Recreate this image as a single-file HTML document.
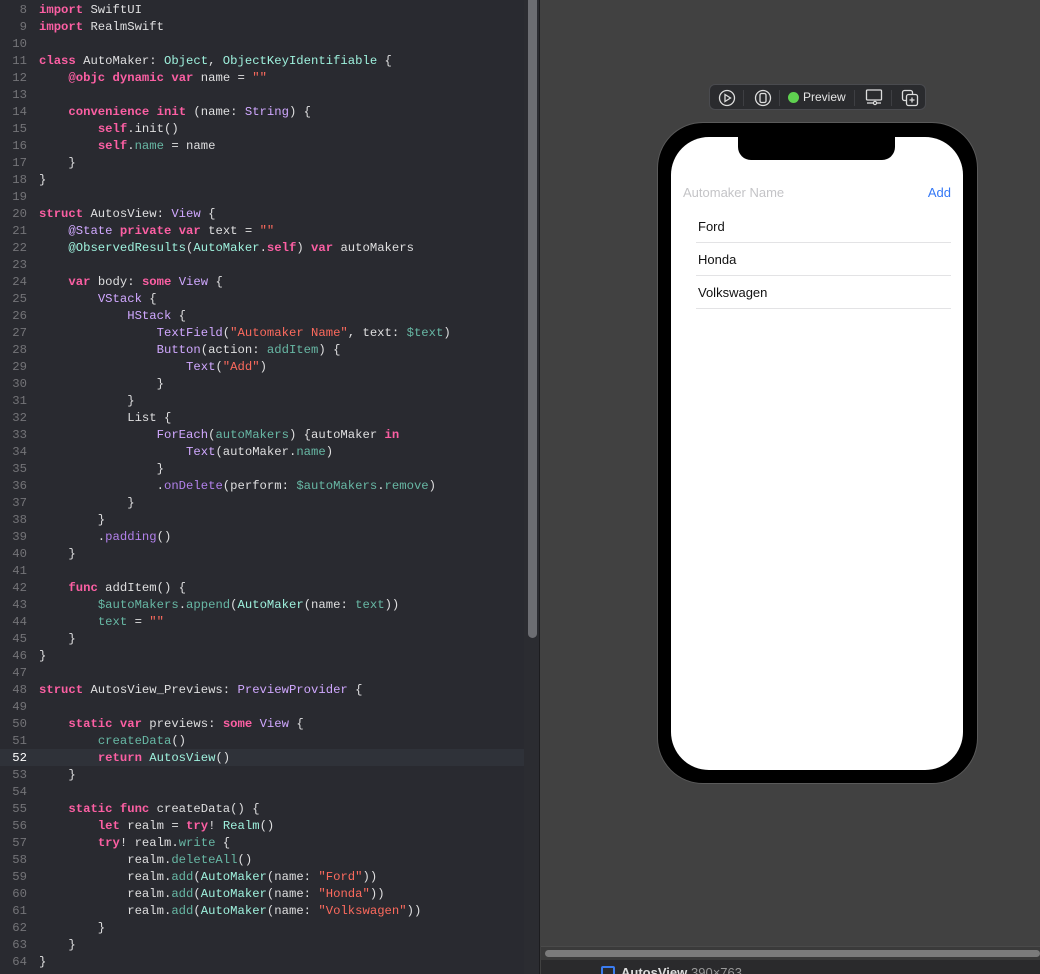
<!DOCTYPE html>
<html><head><meta charset="utf-8"><style>
*{margin:0;padding:0;box-sizing:border-box}
body{width:1040px;height:974px;overflow:hidden;background:#414141;position:relative;font-family:"Liberation Sans",sans-serif}
#ed{position:absolute;left:0;top:0;width:526px;height:974px;background:#292a30}
#hl{position:absolute;left:0;top:749px;width:524px;height:17px;background:#2f3239}
pre{position:absolute;left:0;top:2px;font-family:"Liberation Mono",monospace;font-size:12.25px;line-height:17px;color:#dfdfe0}
.ln{display:inline-block;width:27px;text-align:right;color:#747478;margin-right:12px}
.cur{color:#fff}
.k{color:#fc5fa3;font-weight:bold}
.s{color:#fc6a5d}
.t{color:#9ef1dd}
.p{color:#d0a8ff}
.f{color:#67b7a4}
.m{color:#b281eb}
#vs{position:absolute;left:524px;top:0;width:16px;height:974px;background:#2b2c31;border-right:1px solid #1c1c1f}
#vt{position:absolute;left:528px;top:0;width:9px;height:638px;background:#6c6d72;border-radius:0 0 5px 5px}
#hs{position:absolute;left:541px;top:946px;width:499px;height:14px;background:#3a3a3a;border-top:1px solid #4a4a4a}
#ht{position:absolute;left:545px;top:950px;width:495px;height:7px;background:#7b7b7b;border-radius:4px}
#bb{position:absolute;left:541px;top:960px;width:499px;height:14px;background:#2a2a2c;color:#ddd;font-size:13px;overflow:hidden}
#tb{position:absolute;left:709px;top:84px;width:217px;height:26px;background:#2a2b2e;border:1px solid #4a4b4f;border-radius:6px}
.dv{position:absolute;top:5px;width:1px;height:16px;background:#3e3f43}
#phone{position:absolute;left:657px;top:122px;width:321px;height:662px;background:#000;border-radius:46px;border:1.5px solid #5a5a5a}
#scr{position:absolute;left:671px;top:137px;width:292px;height:633px;background:#fff;border-radius:38px;overflow:hidden}
#notch{position:absolute;left:67px;top:0;width:157px;height:23px;background:#000;border-radius:0 0 13px 13px}
.row{position:absolute;left:27px;font-size:13px;color:#111}
.sep{position:absolute;left:25px;width:255px;height:1px;background:#e3e3e5}
</style></head><body>
<div id="ed"></div><div id="hl"></div>
<pre><span class="ln">8</span><span class="k">import</span> SwiftUI
<span class="ln">9</span><span class="k">import</span> RealmSwift
<span class="ln">10</span>
<span class="ln">11</span><span class="k">class</span> AutoMaker: <span class="t">Object</span>, <span class="t">ObjectKeyIdentifiable</span> {
<span class="ln">12</span>    <span class="k">@objc</span> <span class="k">dynamic</span> <span class="k">var</span> name = <span class="s">""</span>
<span class="ln">13</span>
<span class="ln">14</span>    <span class="k">convenience</span> <span class="k">init</span> (name: <span class="p">String</span>) {
<span class="ln">15</span>        <span class="k">self</span>.init()
<span class="ln">16</span>        <span class="k">self</span>.<span class="f">name</span> = name
<span class="ln">17</span>    }
<span class="ln">18</span>}
<span class="ln">19</span>
<span class="ln">20</span><span class="k">struct</span> AutosView: <span class="p">View</span> {
<span class="ln">21</span>    <span class="p">@State</span> <span class="k">private</span> <span class="k">var</span> text = <span class="s">""</span>
<span class="ln">22</span>    <span class="t">@ObservedResults</span>(<span class="t">AutoMaker</span>.<span class="k">self</span>) <span class="k">var</span> autoMakers
<span class="ln">23</span>
<span class="ln">24</span>    <span class="k">var</span> body: <span class="k">some</span> <span class="p">View</span> {
<span class="ln">25</span>        <span class="p">VStack</span> {
<span class="ln">26</span>            <span class="p">HStack</span> {
<span class="ln">27</span>                <span class="p">TextField</span>(<span class="s">"Automaker Name"</span>, text: <span class="f">$text</span>)
<span class="ln">28</span>                <span class="p">Button</span>(action: <span class="f">addItem</span>) {
<span class="ln">29</span>                    <span class="p">Text</span>(<span class="s">"Add"</span>)
<span class="ln">30</span>                }
<span class="ln">31</span>            }
<span class="ln">32</span>            List {
<span class="ln">33</span>                <span class="p">ForEach</span>(<span class="f">autoMakers</span>) {autoMaker <span class="k">in</span>
<span class="ln">34</span>                    <span class="p">Text</span>(autoMaker.<span class="f">name</span>)
<span class="ln">35</span>                }
<span class="ln">36</span>                .<span class="m">onDelete</span>(perform: <span class="f">$autoMakers</span>.<span class="f">remove</span>)
<span class="ln">37</span>            }
<span class="ln">38</span>        }
<span class="ln">39</span>        .<span class="m">padding</span>()
<span class="ln">40</span>    }
<span class="ln">41</span>
<span class="ln">42</span>    <span class="k">func</span> addItem() {
<span class="ln">43</span>        <span class="f">$autoMakers</span>.<span class="f">append</span>(<span class="t">AutoMaker</span>(name: <span class="f">text</span>))
<span class="ln">44</span>        <span class="f">text</span> = <span class="s">""</span>
<span class="ln">45</span>    }
<span class="ln">46</span>}
<span class="ln">47</span>
<span class="ln">48</span><span class="k">struct</span> AutosView_Previews: <span class="p">PreviewProvider</span> {
<span class="ln">49</span>
<span class="ln">50</span>    <span class="k">static</span> <span class="k">var</span> previews: <span class="k">some</span> <span class="p">View</span> {
<span class="ln">51</span>        <span class="f">createData</span>()
<span class="ln cur">52</span>        <span class="k">return</span> <span class="t">AutosView</span>()
<span class="ln">53</span>    }
<span class="ln">54</span>
<span class="ln">55</span>    <span class="k">static</span> <span class="k">func</span> createData() {
<span class="ln">56</span>        <span class="k">let</span> realm = <span class="k">try</span>! <span class="t">Realm</span>()
<span class="ln">57</span>        <span class="k">try</span>! realm.<span class="f">write</span> {
<span class="ln">58</span>            realm.<span class="f">deleteAll</span>()
<span class="ln">59</span>            realm.<span class="f">add</span>(<span class="t">AutoMaker</span>(name: <span class="s">"Ford"</span>))
<span class="ln">60</span>            realm.<span class="f">add</span>(<span class="t">AutoMaker</span>(name: <span class="s">"Honda"</span>))
<span class="ln">61</span>            realm.<span class="f">add</span>(<span class="t">AutoMaker</span>(name: <span class="s">"Volkswagen"</span>))
<span class="ln">62</span>        }
<span class="ln">63</span>    }
<span class="ln">64</span>}</pre>
<div id="vs"></div><div id="vt"></div>
<div id="hs"></div><div id="ht"></div>
<div id="bb"><span style="position:absolute;left:60px;top:6px;width:14px;height:14px;border:2px solid #3b7cf0;border-radius:2px"></span><span style="position:absolute;left:80px;top:5px;font-weight:bold">AutosView</span><span style="position:absolute;left:150px;top:5px;color:#999">390×763</span></div>
<div id="tb">
<svg style="position:absolute;left:8px;top:4px" width="18" height="18" viewBox="0 0 18 18"><circle cx="9" cy="9" r="7.5" fill="none" stroke="#ddd" stroke-width="1.3"/><path d="M7 5.5L12.5 9L7 12.5Z" fill="none" stroke="#ddd" stroke-width="1.3"/></svg>
<div class="dv" style="left:33px"></div>
<svg style="position:absolute;left:44px;top:4px" width="18" height="18" viewBox="0 0 18 18"><circle cx="9" cy="9" r="7.5" fill="none" stroke="#ddd" stroke-width="1.3"/><rect x="6" y="4.5" width="6" height="9" rx="1.5" fill="none" stroke="#ddd" stroke-width="1.3"/></svg>
<div class="dv" style="left:69px"></div>
<span style="position:absolute;left:78px;top:7px;width:11px;height:11px;border-radius:50%;background:#5fd150"></span>
<span style="position:absolute;left:93px;top:5px;font-size:12px;color:#e6e6e6">Preview</span>
<div class="dv" style="left:144px"></div>
<svg style="position:absolute;left:155px;top:3px" width="18" height="18" viewBox="0 0 18 18"><rect x="1.5" y="2" width="15" height="10" rx="1" fill="none" stroke="#ddd" stroke-width="1.3"/><path d="M2 15H16" stroke="#ddd" stroke-width="1.3"/><circle cx="10" cy="15" r="1.6" fill="#2a2b2e" stroke="#ddd" stroke-width="1.2"/></svg>
<div class="dv" style="left:181px"></div>
<svg style="position:absolute;left:191px;top:4px" width="18" height="18" viewBox="0 0 18 18"><rect x="1.5" y="1.5" width="10" height="10" rx="2" fill="none" stroke="#ddd" stroke-width="1.3"/><rect x="5.5" y="5.5" width="11" height="11" rx="2" fill="#2a2b2e" stroke="#ddd" stroke-width="1.3"/><path d="M11 8.5V13.5M8.5 11H13.5" stroke="#ddd" stroke-width="1.3"/></svg>
</div>
<div id="phone"></div>
<div id="scr">
<div id="notch"></div>
<div style="position:absolute;left:12px;top:48px;font-size:13px;color:#c4c4c7">Automaker Name</div>
<div style="position:absolute;right:12px;top:48px;font-size:13px;color:#3478f6">Add</div>
<div class="row" style="top:82px">Ford</div><div class="sep" style="top:105px"></div>
<div class="row" style="top:115px">Honda</div><div class="sep" style="top:138px"></div>
<div class="row" style="top:148px">Volkswagen</div><div class="sep" style="top:171px"></div>
</div>
</body></html>
